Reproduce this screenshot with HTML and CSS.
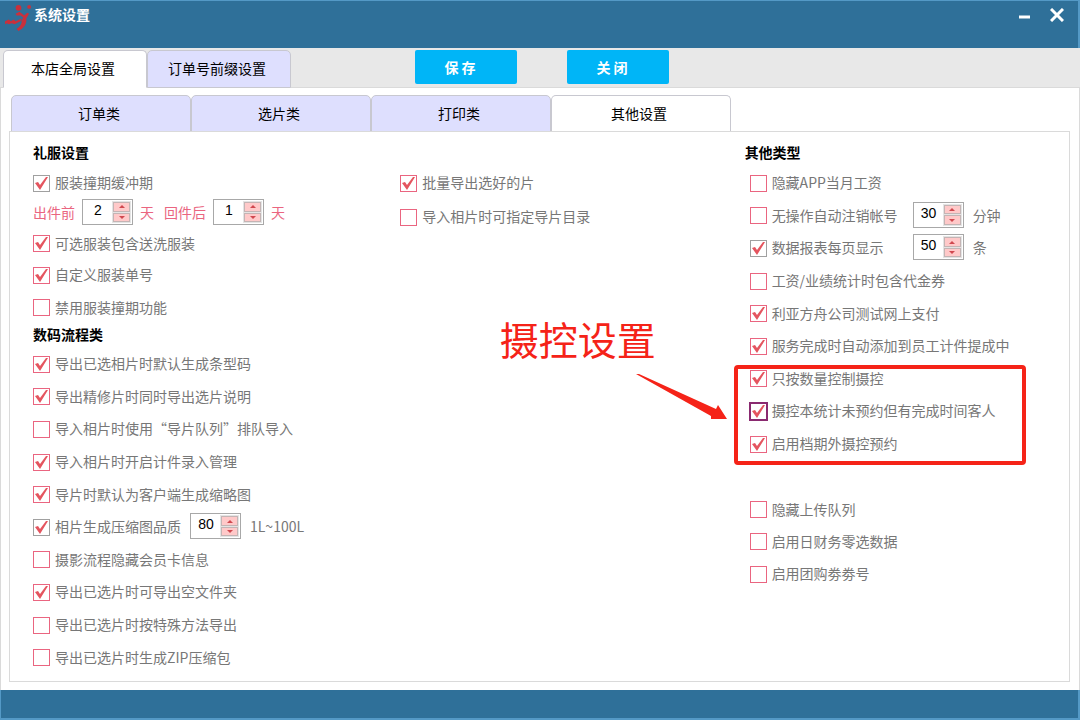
FILE: index.html
```html
<!DOCTYPE html>
<html lang="zh-CN">
<head>
    <meta charset="UTF-8">
    <meta name="viewport" content="width=device-width, initial-scale=1.0">
    <title>系统设置</title>
    <link rel="stylesheet" href="styles.css">
</head>
<body>
<header class="titlebar">
    <svg class="logo" viewBox="0 0 28 28" aria-hidden="true">
        <circle cx="14" cy="4" r="3"/>
        <circle cx="25" cy="3" r="2"/>
        <path d="M11 10 L15 8 L20 12 L23 9 L25 10 L22 15 C23 20 20 25 14 28 L12 26 C16 23 18 20 17 17 L19 14 L16 12 L12 12 Z"/>
        <path d="M0 18 L4 16 L6 18 L9 16 L11 18 L17 15 L16 18 L10 21 L7 20 L4 21 L2 20 L0 21 Z"/>
    </svg>
    <h1>系统设置</h1>
    <div class="window-buttons">
        <button type="button" aria-label="最小化"><svg viewBox="0 0 14 14"><path d="M1 9H12"/></svg></button>
        <button type="button" aria-label="关闭窗口"><svg viewBox="0 0 14 14"><path d="M1 1L13 13M13 1L1 13"/></svg></button>
    </div>
</header>

<div class="toolbar">
    <nav class="tabs">
        <button type="button" class="tab active">本店全局设置</button>
        <button type="button" class="tab">订单号前缀设置</button>
    </nav>
    <div class="actions">
        <button type="button" class="button">保 存</button>
        <button type="button" class="button">关 闭</button>
    </div>
</div>

<main class="content">
    <nav class="tabs sub-tabs">
        <button type="button" class="tab">订单类</button>
        <button type="button" class="tab">选片类</button>
        <button type="button" class="tab">打印类</button>
        <button type="button" class="tab active">其他设置</button>
    </nav>

    <form class="panel">
        <div class="column">
            <h2>礼服设置</h2>
            <div class="dress-list">
                <label class="option"><input type="checkbox" class="partial" checked>服装撞期缓冲期</label>
                <div class="option days">
                    <label for="days-before">出件前</label>
                    <span class="spinner">
                        <input type="text" id="days-before" value="2">
                        <span class="arrows"><button type="button" class="up" aria-label="增加"></button><button type="button" class="down" aria-label="减少"></button></span>
                    </span>
                    <span>天</span>
                    <label for="days-after" class="after">回件后</label>
                    <span class="spinner">
                        <input type="text" id="days-after" value="1">
                        <span class="arrows"><button type="button" class="up" aria-label="增加"></button><button type="button" class="down" aria-label="减少"></button></span>
                    </span>
                    <span>天</span>
                </div>
                <label class="option"><input type="checkbox" checked>可选服装包含送洗服装</label>
                <label class="option"><input type="checkbox" checked>自定义服装单号</label>
                <label class="option"><input type="checkbox">禁用服装撞期功能</label>
            </div>

            <h2>数码流程类</h2>
            <div class="photo-list">
                <label class="option"><input type="checkbox" checked>导出已选相片时默认生成条型码</label>
                <label class="option"><input type="checkbox" checked>导出精修片时同时导出选片说明</label>
                <label class="option"><input type="checkbox">导入相片时使用“导片队列”排队导入</label>
                <label class="option"><input type="checkbox" checked>导入相片时开启计件录入管理</label>
                <label class="option"><input type="checkbox" checked>导片时默认为客户端生成缩略图</label>
                <div class="option">
                    <label class="check"><input type="checkbox" class="partial" checked>相片生成压缩图品质</label>
                    <span class="spinner">
                        <input type="text" value="80" aria-label="压缩图品质">
                        <span class="arrows"><button type="button" class="up" aria-label="增加"></button><button type="button" class="down" aria-label="减少"></button></span>
                    </span>
                    <span>1L~100L</span>
                </div>
                <label class="option"><input type="checkbox">摄影流程隐藏会员卡信息</label>
                <label class="option"><input type="checkbox" checked>导出已选片时可导出空文件夹</label>
                <label class="option"><input type="checkbox">导出已选片时按特殊方法导出</label>
                <label class="option"><input type="checkbox">导出已选片时生成ZIP压缩包</label>
            </div>
        </div>

        <div class="column batch">
            <label class="option"><input type="checkbox" checked>批量导出选好的片</label>
            <label class="option"><input type="checkbox">导入相片时可指定导片目录</label>
        </div>

        <div class="column other">
            <h2>其他类型</h2>
            <div class="other-list">
                <label class="option"><input type="checkbox">隐藏APP当月工资</label>
                <div class="option">
                    <label class="check wide"><input type="checkbox">无操作自动注销帐号</label>
                    <span class="spinner">
                        <input type="text" value="30" aria-label="自动注销分钟数">
                        <span class="arrows"><button type="button" class="up" aria-label="增加"></button><button type="button" class="down" aria-label="减少"></button></span>
                    </span>
                    <span>分钟</span>
                </div>
                <div class="option">
                    <label class="check wide"><input type="checkbox" class="partial" checked>数据报表每页显示</label>
                    <span class="spinner">
                        <input type="text" value="50" aria-label="每页显示条数">
                        <span class="arrows"><button type="button" class="up" aria-label="增加"></button><button type="button" class="down" aria-label="减少"></button></span>
                    </span>
                    <span>条</span>
                </div>
                <label class="option"><input type="checkbox">工资/业绩统计时包含代金券</label>
                <label class="option"><input type="checkbox" checked>利亚方舟公司测试网上支付</label>
                <label class="option"><input type="checkbox" checked>服务完成时自动添加到员工计件提成中</label>
                <label class="option"><input type="checkbox" checked>只按数量控制摄控</label>
                <label class="option"><input type="checkbox" class="focused" checked>摄控本统计未预约但有完成时间客人</label>
                <label class="option"><input type="checkbox" checked>启用档期外摄控预约</label>
                <label class="option after-space"><input type="checkbox">隐藏上传队列</label>
                <label class="option"><input type="checkbox">启用日财务零选数据</label>
                <label class="option"><input type="checkbox">启用团购劵劵号</label>
            </div>

            <div class="highlight"></div>
            <div class="callout">
                <p>摄控设置</p>
                <svg viewBox="0 0 92 48" aria-hidden="true"><path d="M0 0 L3 0 L80 35 L82 31 L91 45 L75 45 L75 42 Z"/></svg>
            </div>
        </div>
    </form>
</main>

<footer class="statusbar"></footer>
</body>
</html>
```
FILE: styles.css
```css
:root {
    --blue: #2f7099;
    --blue-light: #5499c6;
    --pink: #ea6580;
    --mark: #f52318;
    --tab-bg: #dedffe;
    --line: #dadada;
    --text: #777;
}

* {
    box-sizing: border-box;
}

body {
    margin: 0;
    min-height: 100vh;
    display: flex;
    flex-direction: column;
    font-family: "Noto Sans CJK SC", "Noto Sans", sans-serif;
    font-size: 14px;
    line-height: 20px;
    color: var(--text);
    background: white;
}

button,
input {
    margin: 0;
    padding: 0;
    border: none;
    font: inherit;
}

h1,
h2,
p {
    margin: 0;
}

.titlebar {
    display: flex;
    align-items: flex-start;
    height: 48px;
    padding: 3px 14px 0 5px;
    background: var(--blue);
    border-top: 1px solid var(--blue-light);
    border-right: 2px solid var(--blue-light);
}

.logo {
    width: 27px;
    height: 27px;
    margin-right: 2px;
    fill: #c9303c;
}

.titlebar h1 {
    font-size: 14px;
    font-weight: bold;
    color: white;
}

.window-buttons {
    display: flex;
    gap: 18px;
    margin-left: auto;
    padding-top: 4px;
}

.window-buttons button {
    width: 14px;
    height: 14px;
    background: none;
}

.window-buttons svg {
    display: block;
    fill: none;
    stroke: white;
    stroke-width: 3;
}

.toolbar {
    display: flex;
    height: 40px;
    padding: 2px 3px 0;
    background: #e8e8e8;
    border-bottom: 1px solid var(--line);
}

.tabs {
    display: flex;
}

.tab {
    width: 144px;
    height: 38px;
    padding: 0 4px 2px 0;
    border: 1px solid #c8c8d0;
    border-radius: 5px 5px 0 0;
    background: var(--tab-bg);
    color: black;
}

.tab.active {
    background: white;
    border-bottom-color: white;
}

.actions {
    display: flex;
    gap: 50px;
    margin-left: 124px;
}

.button {
    width: 102px;
    height: 34px;
    padding-right: 12px;
    border-radius: 2px;
    background: #00b5f7;
    color: white;
    font-weight: bold;
}

.content {
    flex: 1;
    display: flex;
    flex-direction: column;
    padding: 7px 9px 8px 8px;
    border: solid var(--line);
    border-width: 0 1px;
}

.sub-tabs {
    padding-left: 2px;
}

.sub-tabs .tab {
    width: 180px;
    height: 37px;
    margin-bottom: -1px;
}

.panel {
    flex: 1;
    display: grid;
    grid-template-columns: 368fr 345fr 325fr;
    padding: 10px 0 8px 23px;
    border: 1px solid var(--line);
}

.column {
    display: flex;
    flex-direction: column;
}

h2 {
    font-size: 14px;
    line-height: 20px;
    font-weight: bold;
    color: black;
}

.option,
.check {
    display: flex;
    align-items: center;
}

.option {
    white-space: nowrap;
}

.check {
    width: 152px;
}

.check.wide {
    width: 158px;
}

input[type="checkbox"] {
    appearance: none;
    width: 17px;
    height: 17px;
    margin: 2px 5px 0 0;
    border: 1px solid var(--pink);
    background: white;
}

input[type="checkbox"]:checked {
    background: url("data:image/svg+xml,%3Csvg xmlns='http://www.w3.org/2000/svg' viewBox='0 0 15 15'%3E%3Cpath d='M1 7L4 6L6 9L12 1L14 1L6 14Z' fill='%23e4555f'/%3E%3C/svg%3E") center / 15px 15px no-repeat;
}

input[type="checkbox"].partial {
    border-color: #a0a0a0;
}

input[type="checkbox"].focused {
    border-color: #8a2a70;
    outline: 1px solid #8a2a70;
}

.dress-list {
    display: grid;
    grid-template-rows: 30px 30px 31px 32px 33px;
    padding: 5px 0 1px;
}

.photo-list {
    flex: 1;
    display: grid;
    grid-auto-rows: minmax(32px, 1fr);
    padding-top: 3px;
}

.other-list {
    flex: 1;
    display: grid;
    grid-template-rows: repeat(15, minmax(32px, 1fr));
    padding: 4px 0 18px 5px;
}

/* leaves one empty row above */
.after-space {
    grid-row: span 2;
    align-self: end;
    height: 32px;
}

.batch {
    padding-top: 23px;
}

.batch .option {
    height: 34px;
}

.spinner {
    display: flex;
    width: 51px;
    height: 26px;
    margin: 0 9px 0 5px;
    padding: 1px;
    border: 1px solid #a8a8a8;
    background: white;
}

.spinner input {
    flex: 1;
    min-width: 0;
    height: 18px;
    font-family: "Liberation Sans", Arial, sans-serif;
    text-align: center;
    color: black;
}

.arrows {
    display: flex;
    flex-direction: column;
    gap: 1px;
    padding: 1px;
    background: #e4e4e4;
}

.arrows button {
    display: flex;
    align-items: center;
    justify-content: center;
    flex: 1;
    width: 17px;
    border: 1px solid #c4b4b4;
    background: #ffc9c9;
}

.arrows button::before {
    content: "";
    border: 3px solid transparent;
}

.arrows .up::before {
    border-top: none;
    border-bottom-color: #d0484f;
}

.arrows .down::before {
    border-bottom: none;
    border-top-color: #d0484f;
}

.days {
    color: var(--pink);
}

.days .spinner {
    margin: 0 7px;
}

.days .after {
    margin-left: 10px;
}

/* red marks drawn over the form */
.other {
    position: relative;
}

.highlight {
    position: absolute;
    top: 223px;
    left: -11px;
    width: 292px;
    height: 100px;
    border: 4px solid var(--mark);
    border-radius: 4px;
    pointer-events: none;
}

.callout {
    position: absolute;
    top: 170px;
    left: -245px;
    width: 230px;
    color: var(--mark);
    pointer-events: none;
}

.callout p {
    font-size: 39px;
    line-height: 52px;
}

.callout svg {
    display: block;
    width: 92px;
    height: 48px;
    margin: 10px 0 0 136px;
    fill: var(--mark);
}

.statusbar {
    height: 30px;
    background: var(--blue);
    border: solid var(--blue-light);
    border-width: 0 2px 2px 1px;
}
```
